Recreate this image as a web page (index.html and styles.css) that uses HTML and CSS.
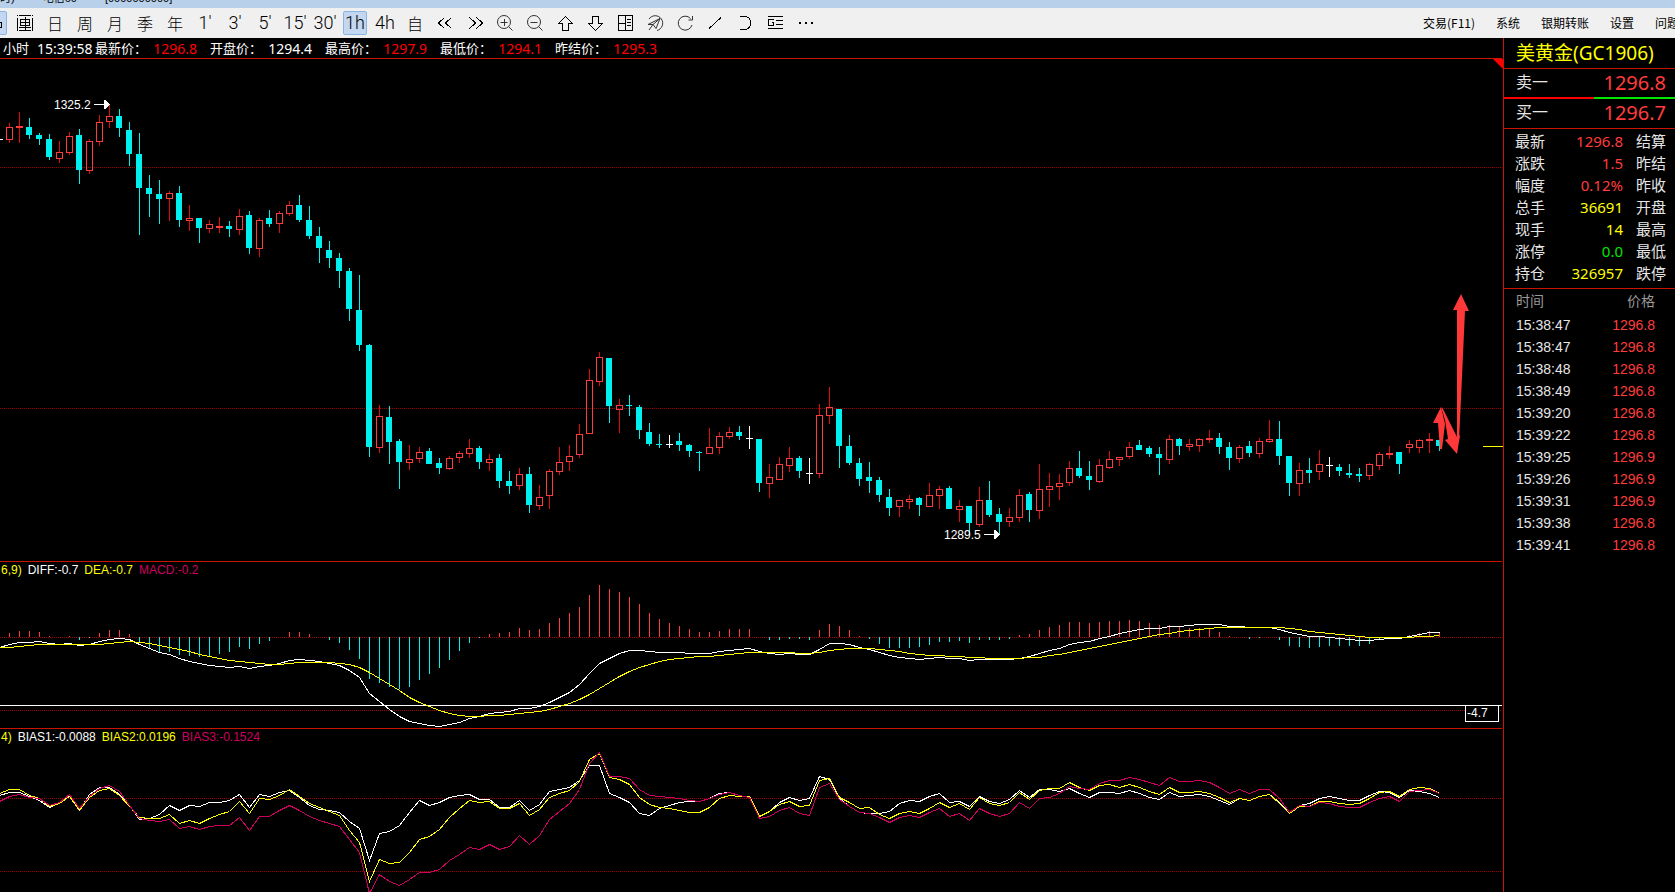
FILE: index.html
```html
<!DOCTYPE html>
<html lang="zh-CN">
<head>
    <meta charset="UTF-8">
    <meta name="viewport" content="width=device-width, initial-scale=1.0">
    <title>美黄金(GC1906)</title>
    <link rel="stylesheet" href="styles.css">
</head>
<body>
    <div class="titlebar"><span>时)</span><span>电信60</span><span>[0000000000]</span></div>

    <header class="toolbar">
        <div class="tools">
            <button class="active" aria-label="K线"><svg width="18" height="18" viewBox="0 0 18 18"><path d="M5.500 3v12M3.500 6.500h4v5h-4zM13.500 5v3M13.500 14v3M11.500 8.500h4v5h-4z"/></svg></button>
            <button aria-label="画面"><svg width="18" height="18" viewBox="0 0 18 18"><path d="M1.500 1v1M1.500 4v13M16.500 1v1M16.500 4v13M3 1.500h12M4.500 5.500h9v6h-9zM4.500 8.500h9M9.500 3v13M3 13.500h12M3 16.500h12"/></svg></button>
            <button>日</button>
            <button>周</button>
            <button>月</button>
            <button>季</button>
            <button>年</button>
            <button class="num">1′</button>
            <button class="num">3′</button>
            <button class="num">5′</button>
            <button class="num">15′</button>
            <button class="num">30′</button>
            <button class="num active">1h</button>
            <button class="num">4h</button>
            <button>自</button>
            <button aria-label="后退"><svg width="18" height="18" viewBox="0 0 18 18"><path d="M8.500 3.500l-6 5.500 6 5.500M15.500 3.500l-6 5.500 6 5.500"/></svg></button>
            <button aria-label="前进"><svg width="18" height="18" viewBox="0 0 18 18"><path d="M3.500 3.500l6 5.500-6 5.500M10.500 3.500l6 5.500-6 5.500"/></svg></button>
            <button aria-label="放大"><svg class="soft" width="18" height="18" viewBox="0 0 18 18"><circle cx="8" cy="8" r="6.500"/><path d="M12.500 12.500l4 4M4.500 8.500h7M8.500 5v7"/></svg></button>
            <button aria-label="缩小"><svg class="soft" width="18" height="18" viewBox="0 0 18 18"><circle cx="8" cy="8" r="6.500"/><path d="M12.500 12.500l4 4M4.500 8.500h7"/></svg></button>
            <button aria-label="向上"><svg width="18" height="18" viewBox="0 0 18 18"><path d="M9.500 2.500l7 7h-4v7h-6v-7h-4z"/></svg></button>
            <button aria-label="向下"><svg width="18" height="18" viewBox="0 0 18 18"><path d="M9.500 16.500l7-7h-4v-7h-6v7h-4z"/></svg></button>
            <button aria-label="版面"><svg width="18" height="18" viewBox="0 0 18 18"><path d="M2.500 1.500h14v15h-14zM9.500 1.500v15M2.500 9.500h7M11 5.500h4M11 8.500h4M11 11.500h4"/></svg></button>
            <button aria-label="发送"><svg class="soft" width="18" height="18" viewBox="0 0 18 18"><path d="M3 5a7.500 7.500 0 1 1 8 11.500M2 10.500l12-6-4 10-3-4zM14 4.500l-7 6-4 5.500"/></svg></button>
            <button aria-label="刷新"><svg class="soft" width="18" height="18" viewBox="0 0 18 18"><path d="M16 11a7 7 0 1 1-1.500-6.500M16.500 2v4h-4"/></svg></button>
            <button aria-label="画线"><svg width="18" height="18" viewBox="0 0 18 18"><path d="M3 14.500L15 3.500"/></svg></button>
            <button aria-label="画弧"><svg width="18" height="18" viewBox="0 0 18 18"><path d="M4 2.500h6q4.500 1 4.500 6.500t-4.500 6.500h-6"/></svg></button>
            <button aria-label="公告"><svg width="18" height="18" viewBox="0 0 18 18"><path d="M2 2.500h15M2 14.500h15M10 6.500h7M10 10.500h7M7.500 6V5.500h-5v6h5v-3h-2"/></svg></button>
            <button aria-label="更多"><svg width="18" height="18" viewBox="0 0 18 18"><path d="M3 9h2M9 9h2M15 9h2" stroke-width="2"/></svg></button>
        </div>
        <nav class="menu">
            <a href="#">交易(F11)</a>
            <a href="#">系统</a>
            <a href="#">银期转账</a>
            <a href="#">设置</a>
            <a href="#">问题</a>
        </nav>
    </header>

    <div class="content">
        <main class="charts">
            <div class="status">
                <span class="period">小时</span>
                <span class="clock">15:39:58</span>
                <dl>
                    <div><dt>最新价：</dt><dd class="red">1296.8</dd></div>
                    <div><dt>开盘价：</dt><dd>1294.4</dd></div>
                    <div><dt>最高价：</dt><dd class="red">1297.9</dd></div>
                    <div><dt>最低价：</dt><dd class="red">1294.1</dd></div>
                    <div><dt>昨结价：</dt><dd class="red">1295.3</dd></div>
                </dl>
            </div>
            <section class="panel">
                <svg id="kline" class="plot kline"></svg>
                <i class="corner"></i>
                <i class="last-price"></i>
            </section>
            <section class="panel">
                <div class="legend"><span class="yellow">6,9)</span><span>DIFF:-0.7</span><span class="yellow">DEA:-0.7</span><span class="pink">MACD:-0.2</span></div>
                <svg id="macd" class="plot macd"></svg>
                <span class="cursor-value">-4.7</span>
            </section>
            <section class="panel">
                <div class="legend"><span class="yellow">4)</span><span>BIAS1:-0.0088</span><span class="yellow">BIAS2:0.0196</span><span class="pink">BIAS3:-0.1524</span></div>
                <svg id="bias" class="plot bias"></svg>
            </section>
        </main>

        <aside class="quote">
            <h1>美黄金(GC1906)</h1>
            <div class="level ask"><span>卖一</span><b>1296.8</b></div>
            <div class="ratio"></div>
            <div class="level bid"><span>买一</span><b>1296.7</b></div>
            <table class="fields">
                <tr><th>最新</th><td class="up">1296.8</td><th>结算</th></tr>
                <tr><th>涨跌</th><td class="up">1.5</td><th>昨结</th></tr>
                <tr><th>幅度</th><td class="up">0.12%</td><th>昨收</th></tr>
                <tr><th>总手</th><td class="yellow">36691</td><th>开盘</th></tr>
                <tr><th>现手</th><td class="yellow">14</td><th>最高</th></tr>
                <tr><th>涨停</th><td class="green">0.0</td><th>最低</th></tr>
                <tr><th>持仓</th><td class="yellow">326957</td><th>跌停</th></tr>
            </table>
            <table class="ticks">
                <tr><th>时间</th><th>价格</th></tr>
                <tr><td>15:38:47</td><td>1296.8</td></tr>
                <tr><td>15:38:47</td><td>1296.8</td></tr>
                <tr><td>15:38:48</td><td>1296.8</td></tr>
                <tr><td>15:38:49</td><td>1296.8</td></tr>
                <tr><td>15:39:20</td><td>1296.8</td></tr>
                <tr><td>15:39:22</td><td>1296.8</td></tr>
                <tr><td>15:39:25</td><td>1296.9</td></tr>
                <tr><td>15:39:26</td><td>1296.9</td></tr>
                <tr><td>15:39:31</td><td>1296.9</td></tr>
                <tr><td>15:39:38</td><td>1296.8</td></tr>
                <tr><td>15:39:41</td><td>1296.8</td></tr>
            </table>
        </aside>
    </div>

    <script src="chart.js"></script>
</body>
</html>
```

FILE: styles.css
```css
* {
    box-sizing: border-box;
}
body {
    margin: 0;
    min-height: 100vh;
    display: flex;
    flex-direction: column;
    overflow: hidden;
    background: #000;
    color: #fff;
    font-family: "Liberation Sans", "Noto Sans CJK SC", sans-serif;
    font-size: 12px;
}

/* title bar and toolbar */
.titlebar {
    height: 8px;
    overflow: hidden;
    display: flex;
    align-items: flex-end;
    gap: 28px;
    padding-bottom: 4px;
    background: #b9d0ea;
    color: #000;
    font-size: 11px;
    line-height: 12px;
    white-space: nowrap;
}
.toolbar {
    height: 30px;
    display: flex;
    align-items: center;
    background: #f0f0f0;
    overflow: hidden;
}
.tools {
    display: flex;
    flex: none;
    gap: 6px;
    margin-left: -17px;
}
.tools button {
    width: 24px;
    height: 24px;
    padding: 0;
    display: flex;
    align-items: center;
    justify-content: center;
    border: 1px solid transparent;
    border-radius: 2px;
    background: none;
    color: #000;
    font: 300 16px/22px "Noto Sans CJK SC", sans-serif;
    white-space: nowrap;
}
.tools .num {
    font: 300 18px/22px Roboto, sans-serif;
}
.tools .active {
    background: #c3d8f0;
    border-color: #8ab4e0;
}
.tools svg {
    flex: none;
    fill: none;
    stroke: #000;
    shape-rendering: crispEdges;
}
.tools .soft {
    stroke: #333;
    shape-rendering: auto;
}
.menu {
    flex: none;
    width: 252px;
    margin-left: auto;
    display: flex;
    gap: 21px;
    overflow: hidden;
    white-space: nowrap;
}
.menu a {
    flex: none;
    color: #000;
    text-decoration: none;
    font: 12px/20px "Noto Sans CJK SC", sans-serif;
}

/* charts */
.content {
    flex: 1;
    display: flex;
}
.charts {
    flex: 1;
    min-width: 0;
}
.status {
    height: 21px;
    display: flex;
    margin-right: 1px;
    border-bottom: 1px solid #c81400;
    line-height: 21px;
    white-space: nowrap;
    font-family: "Noto Sans", "Noto Sans CJK SC", sans-serif;
    font-size: 13px;
}
.period {
    width: 37px;
    padding-left: 3px;
}
.clock {
    width: 58px;
    font-size: 14px;
}
.status dl {
    display: flex;
    gap: 13px;
    margin: 0;
}
.status dl div {
    display: flex;
    width: 102px;
}
.status dt {
    width: 60px;
}
.status dd {
    margin: 0;
    font-size: 14px;
}
.panel {
    position: relative;
    margin-right: 1px;
    border-bottom: 1px solid #c81400;
}
.panel:last-child {
    border-bottom: 0;
}
.plot {
    display: block;
    width: 100%;
    shape-rendering: crispEdges;
}
.kline {
    height: 502px;
}
.macd {
    height: 166px;
}
.bias {
    height: 163px;
}
.corner {
    position: absolute;
    top: 0;
    right: -1px;
    border-top: 10px solid #f00;
    border-left: 10px solid transparent;
}
.last-price {
    position: absolute;
    top: 387px;
    right: -1px;
    width: 20px;
    height: 1px;
    background: #ff0;
}
.legend {
    position: absolute;
    top: 0;
    left: 1px;
    display: flex;
    gap: 6px;
    line-height: 17px;
}
.cursor-value {
    position: absolute;
    top: 143px;
    right: 3px;
    width: 34px;
    height: 17px;
    padding-left: 1px;
    border: 1px solid #fff;
    background: #000;
    line-height: 15px;
}

.grid {
    stroke: #a00000;
    stroke-dasharray: 1 1;
}
.cursor {
    stroke: #fff;
}
.rise {
    fill: none;
    stroke: #ff3c3c;
}
.rise-wick {
    stroke: #e00a0a;
}
.fall {
    fill: #00f0f0;
    stroke: none;
}
.fall-wick {
    stroke: #00f0f0;
}
.flat {
    stroke: #fff;
}
.line {
    fill: none;
    stroke: #fff;
}
.line-yellow {
    stroke: #ff0;
}
.line-pink {
    stroke: #d0005f;
}
.mark {
    fill: #fff;
}
.forecast {
    fill: #ff3939;
    shape-rendering: auto;
}

/* quote column */
.quote {
    flex: none;
    width: 172px;
    overflow: hidden;
    border-left: 1px solid #c81400;
    color: #e6e6e6;
    font-family: "Noto Sans", "Noto Sans CJK SC", sans-serif;
    white-space: nowrap;
}
.quote h1 {
    height: 31px;
    margin: 0;
    padding-left: 12px;
    border-bottom: 1px solid #c81400;
    color: #ff0;
    font-size: 19px;
    font-weight: normal;
    line-height: 30px;
}
.level {
    height: 28px;
    display: flex;
    justify-content: space-between;
    padding: 0 9px 0 12px;
    font-size: 16px;
    line-height: 27px;
}
.level b {
    color: #ff3c3c;
    font-size: 20px;
    font-weight: normal;
}
.bid {
    height: 30px;
    border-bottom: 1px solid #c81400;
}
.ratio {
    height: 2px;
    background: linear-gradient(90deg, #f00 90px, #00e600 90px);
}
.quote table {
    width: 100%;
    border-collapse: collapse;
    table-layout: fixed;
}
.quote th,
.quote td {
    height: 22px;
    padding: 0;
    font-weight: normal;
    text-align: left;
    line-height: 22px;
}
.quote .fields {
    margin: 1px 0 4px;
    font-size: 15px;
}
.quote .fields th:first-child {
    width: 42px;
    padding-left: 11px;
}
.quote .fields td {
    width: 77px;
    text-align: right;
}
.quote .fields th:last-child {
    padding-left: 13px;
}
.quote .fields th {
    font-size: 15px;
}
.ticks {
    border-top: 1px solid #c81400;
    font-family: "Liberation Sans", "Noto Sans CJK SC", sans-serif;
    font-size: 14px;
}
.quote .ticks th {
    height: 25px;
    color: #999;
}
.quote .ticks th:first-child,
.quote .ticks td:first-child {
    width: 92px;
    padding-left: 12px;
}
.quote .ticks th:last-child,
.quote .ticks td:last-child {
    padding-right: 20px;
    text-align: right;
}
.ticks td:last-child {
    color: #ff3c3c;
}

.red {
    color: #f00;
}
.up {
    color: #ff3c3c;
}
.yellow {
    color: #ff0;
}
.green {
    color: #00e600;
}
.pink {
    color: #d0005f;
}
```

FILE: chart.js
```javascript
const STEP = 10;
const FIRST_X = 9;

// u = rise, d = fall, w = unchanged; then high, body top, body bottom, low
const candles = `
u 123 127 140 143,u 112 126 128 143,d 118 127 135 139,d 133 135 139 145,d 134 139 157 160,
u 141 152 159 163,u 132 136 153 155,d 129 135 170 184,u 139 141 171 174,u 115 122 142 146,
u 104 116 122 128,d 109 116 128 137,d 122 130 154 166,d 133 154 188 235,d 175 188 194 217,
d 180 194 199 224,u 191 193 199 221,d 186 193 220 227,u 205 218 221 231,d 218 218 228 243,
u 220 224 229 233,u 217 226 228 233,d 221 226 229 237,u 209 216 230 235,d 211 215 248 254,
u 218 220 249 257,d 210 218 224 227,u 211 213 224 233,u 201 205 214 216,d 195 205 220 222,
d 206 220 236 239,d 227 236 248 263,d 241 250 258 268,d 253 258 271 288,d 268 271 309 321,
d 275 310 345 351,d 344 345 447 457,u 405 416 448 453,d 406 417 442 464,d 439 441 462 489,
u 445 459 463 470,u 447 452 459 463,d 448 451 464 464,d 458 463 468 474,u 456 458 469 470,
u 451 453 458 463,u 439 448 454 458,d 446 448 462 469,u 454 459 463 471,d 454 458 481 488,
d 471 481 486 494,u 468 474 486 490,d 467 474 505 513,u 485 497 506 510,u 469 471 496 509,
u 447 462 472 475,u 445 456 462 471,u 424 434 455 458,u 369 380 434 434,u 352 357 382 386,
d 358 358 406 423,u 399 405 410 433,d 395 405 406 416,d 405 407 430 439,d 423 432 444 446,
d 434 444 445 448,w 435 444 445 448,d 433 441 445 451,d 444 445 451 457,d 451 452 453 471,
u 428 447 454 454,u 432 436 448 454,u 427 432 437 439,d 426 432 436 440,w 426 438 439 449,
d 439 439 483 492,u 464 477 484 498,u 457 464 480 480,u 447 458 466 472,d 456 458 471 478,
w 458 473 474 484,u 404 415 474 478,u 387 407 416 424,d 409 409 446 468,d 435 446 463 465,
d 458 463 479 486,d 462 477 481 493,d 477 480 495 502,d 489 497 508 516,u 500 500 507 517,
u 495 499 502 509,d 497 498 505 516,u 483 495 507 507,u 486 489 496 509,d 486 488 509 509,
u 500 506 510 522,d 506 506 523 534,u 487 500 525 527,d 481 500 515 517,d 508 514 522 535,
u 508 517 522 527,u 489 495 518 522,d 492 494 510 522,u 464 489 511 519,u 473 486 490 507,
u 474 483 487 500,u 461 468 483 486,d 451 468 476 478,d 461 476 480 490,u 459 465 482 483,
u 451 459 468 469,u 457 457 460 466,u 442 447 457 459,d 440 445 450 450,d 446 448 454 457,
d 447 454 458 475,u 435 439 460 464,d 438 439 446 455,u 439 444 447 451,u 438 439 446 452,
u 430 438 440 443,d 433 438 447 454,d 442 447 458 470,u 445 447 459 463,d 441 446 453 457,
u 438 441 454 458,u 420 439 442 443,d 421 439 456 465,d 456 456 483 496,u 463 470 484 496,
d 458 470 473 483,u 450 464 472 480,w 457 465 466 477,d 464 467 471 476,d 464 473 475 478,
d 468 474 476 482,u 463 464 476 480,u 452 454 466 470,u 446 453 455 459,d 452 452 464 474,
u 440 444 448 453,u 439 440 448 453,u 433 439 441 453,d 440 440 446 451
`.trim().split(/,\s*/).map(row => row.split(' '));

const bars = [
    4, 6, 6, 5, 1, 0, 1, -3, -1, 4, 7, 7, 3, -6, -11, -15, -15, -18, -19, -20,
    -19, -17, -15, -10, -12, -7, -4, 0, 5, 5, 3, 0, -3, -6, -13, -22, -42, -46, -50, -52,
    -50, -43, -37, -31, -23, -14, -6, -1, 3, 4, 5, 9, 7, 8, 14, 19, 24, 30, 42, 52,
    48, 45, 40, 33, 24, 18, 14, 11, 8, 5, 5, 6, 8, 8, 8, 0, -3, -3, -2, -2,
    -3, 7, 13, 11, 7, 1, -2, -7, -11, -11, -11, -10, -8, -5, -5, -4, -6, -3, -3, -3,
    -2, 2, 3, 7, 10, 12, 15, 15, 14, 15, 16, 16, 17, 16, 14, 12, 12, 10, 9, 9,
    8, 5, 1, 0, -2, -1, 0, -3, -9, -10, -11, -10, -9, -9, -9, -9, -7, -2, 0, 0,
    2, 4, 6, 4
];

// each line starts one step left of the visible area
const diff = [
    647, 644, 642, 642, 641, 643, 644, 643, 645, 644, 641, 639, 638, 639, 644, 648, 652, 654, 658, 661, 663,
    665, 666, 667, 666, 668, 666, 665, 663, 660, 659, 660, 661, 663, 665, 670, 677, 693, 701, 709, 716,
    721, 723, 725, 726, 724, 722, 718, 716, 713, 712, 711, 708, 708, 706, 702, 697, 692, 684, 673, 663,
    658, 653, 650, 650, 651, 652, 652, 652, 653, 653, 653, 651, 650, 649, 648, 651, 653, 654, 653, 654,
    654, 649, 643, 643, 644, 647, 649, 652, 655, 657, 658, 659, 658, 657, 658, 658, 660, 659, 659, 659,
    659, 658, 656, 653, 650, 648, 644, 642, 641, 638, 636, 633, 631, 629, 628, 628, 626, 626, 625, 624,
    624, 624, 626, 626, 627, 627, 627, 629, 632, 634, 636, 636, 637, 638, 639, 640, 640, 639, 638, 638,
    636, 634, 632, 632
];
const dea = [
    647, 647, 646, 645, 644, 644, 644, 644, 644, 644, 644, 643, 642, 641, 642, 643, 645, 647, 649, 651, 654,
    656, 658, 660, 661, 662, 663, 664, 664, 663, 662, 662, 662, 662, 663, 664, 667, 672, 678, 684, 690,
    697, 702, 706, 710, 713, 715, 716, 716, 715, 715, 714, 713, 712, 711, 709, 706, 703, 699, 694, 688,
    682, 676, 671, 667, 664, 661, 659, 658, 657, 656, 656, 655, 654, 653, 652, 652, 652, 652, 652, 653,
    653, 652, 650, 649, 648, 648, 648, 649, 650, 651, 653, 654, 655, 655, 656, 656, 657, 657, 658, 658,
    658, 658, 657, 657, 655, 654, 652, 650, 648, 646, 644, 642, 640, 638, 636, 634, 633, 631, 630, 629,
    628, 627, 627, 627, 627, 627, 627, 627, 628, 629, 631, 632, 633, 634, 635, 636, 637, 637, 637, 637,
    637, 636, 636, 635
];
const bias1 = [
    795, 792, 792, 796, 800, 807, 802, 796, 809, 794, 787, 787, 794, 805, 819, 818, 814, 805, 810, 805, 806,
    802, 802, 800, 794, 807, 794, 796, 792, 790, 797, 805, 809, 810, 812, 821, 828, 860, 833, 831, 825,
    812, 800, 805, 802, 797, 795, 794, 799, 799, 807, 807, 800, 810, 804, 791, 789, 787, 780, 765, 765,
    793, 797, 802, 813, 815, 808, 805, 802, 801, 801, 798, 793, 792, 795, 797, 816, 811, 802, 797, 800,
    798, 776, 779, 798, 806, 812, 813, 813, 811, 803, 800, 801, 796, 793, 802, 801, 806, 796, 801, 803,
    799, 790, 797, 789, 789, 791, 788, 793, 797, 792, 792, 793, 790, 793, 797, 799, 792, 796, 795, 794,
    796, 800, 804, 798, 800, 796, 794, 802, 812, 805, 803, 798, 796, 798, 800, 800, 795, 791, 792, 797,
    790, 791, 793, 797
];
const bias2 = [
    793, 789, 789, 795, 798, 806, 803, 796, 810, 797, 790, 788, 795, 806, 817, 818, 818, 814, 823, 820, 823,
    818, 814, 811, 801, 813, 798, 799, 795, 789, 796, 803, 807, 811, 815, 830, 842, 881, 859, 863, 862,
    852, 839, 836, 829, 817, 808, 800, 802, 801, 808, 808, 803, 815, 809, 797, 793, 790, 781, 759, 753,
    777, 779, 784, 797, 804, 807, 808, 810, 812, 812, 807, 798, 795, 796, 796, 816, 811, 804, 801, 806,
    805, 780, 778, 797, 802, 808, 807, 814, 818, 813, 811, 813, 808, 802, 807, 803, 809, 797, 803, 805,
    802, 792, 799, 790, 788, 788, 782, 787, 790, 785, 784, 787, 784, 787, 791, 794, 787, 792, 792, 791,
    793, 797, 802, 798, 800, 796, 794, 803, 813, 806, 806, 801, 801, 803, 804, 803, 798, 792, 791, 796,
    789, 787, 788, 793
];
const bias3 = [
    801, 796, 794, 797, 798, 805, 802, 794, 808, 796, 788, 785, 791, 805, 818, 820, 821, 819, 828, 826, 829,
    826, 825, 825, 817, 830, 816, 816, 810, 805, 810, 816, 820, 823, 826, 839, 852, 893, 874, 881, 885,
    879, 872, 872, 869, 860, 854, 847, 849, 844, 849, 846, 835, 844, 835, 819, 811, 803, 789, 763, 752,
    776, 776, 778, 789, 795, 796, 797, 798, 800, 801, 798, 794, 792, 795, 797, 818, 816, 810, 807, 813,
    815, 787, 783, 799, 806, 812, 813, 817, 822, 817, 815, 817, 812, 808, 816, 813, 820, 808, 813, 816,
    813, 802, 808, 798, 797, 793, 786, 788, 789, 783, 780, 780, 777, 779, 782, 785, 777, 781, 781, 780,
    782, 787, 793, 789, 793, 789, 789, 798, 812, 805, 806, 802, 803, 806, 807, 807, 802, 798, 796, 801,
    791, 790, 789, 793
];

function vline(x, y1, y2, cls) {
    return y2 > y1 ? `<path class="${cls}" d="M${x + 0.5} ${y1}V${y2}"/>` : '';
}

function hline(y, cls) {
    return `<line class="${cls}" x1="0" x2="100%" y1="${y + 0.5}" y2="${y + 0.5}"/>`;
}

function line(values, cls) {
    const points = values.map((y, i) => `${FIRST_X - STEP + i * STEP + 0.5},${y + 0.5}`).join(' ');
    return `<polyline class="line ${cls}" points="${points}"/>`;
}

function mark(x, y, text) {
    return `<text class="mark" font-size="12" x="${x}" y="${y + 5}">${text}</text>
        <path class="mark" d="M${x + 40} ${y}h10v-4h1l5 4v1l-5 4h-1v-4h-10z"/>`;
}

function candle([type, ...values], i) {
    const [high, top, bottom, low] = values.map(Number);
    const x = FIRST_X + i * STEP;
    if (type === 'w') {
        return vline(x, high, low, 'flat') + `<path class="flat" d="M${x - 3} ${top + 0.5}h7"/>`;
    }
    if (type === 'd') {
        return vline(x, high, low, 'fall-wick') +
            `<rect class="fall" x="${x - 3}" y="${top}" width="6" height="${bottom - top}"/>`;
    }
    return vline(x, high, top, 'rise-wick') + vline(x, bottom, low, 'rise-wick') +
        `<rect class="rise" x="${x - 2.5}" y="${top + 0.5}" width="6" height="${bottom - top - 1}"/>`;
}

// top is the y value that falls on the upper edge of the panel
function draw(id, top, content) {
    document.getElementById(id).innerHTML = `<g transform="translate(0 ${-top})">${content}</g>`;
}

draw('kline', 59,
    hline(167, 'grid') + hline(408, 'grid') +
    '<path class="flat" d="M0 139.500h3"/>' +
    candles.map(candle).join('') +
    mark(54, 104, '1325.2') + mark(944, 534, '1289.5') +
    `<path class="forecast" d="M1441 407L1433 423H1438L1440 449H1442L1445 424z"/>
     <path class="forecast" d="M1441 407L1443 409L1457 437L1460 435L1457 454L1445 440L1448 439L1445 420z"/>
     <path class="forecast" d="M1461 294L1469 311H1465L1459 442H1457V310H1453z"/>`
);

draw('macd', 562,
    hline(637, 'grid') + hline(710, 'grid') + hline(705, 'cursor') +
    bars.map((v, i) => vline(FIRST_X + i * STEP, Math.min(637, 637 - v), Math.max(637, 637 - v), v > 0 ? 'rise' : 'fall-wick')).join('') +
    line(diff, '') + line(dea, 'line-yellow')
);

draw('bias', 729,
    hline(798, 'grid') + hline(871, 'grid') +
    line(bias1, '') + line(bias2, 'line-yellow') + line(bias3, 'line-pink')
);
```
